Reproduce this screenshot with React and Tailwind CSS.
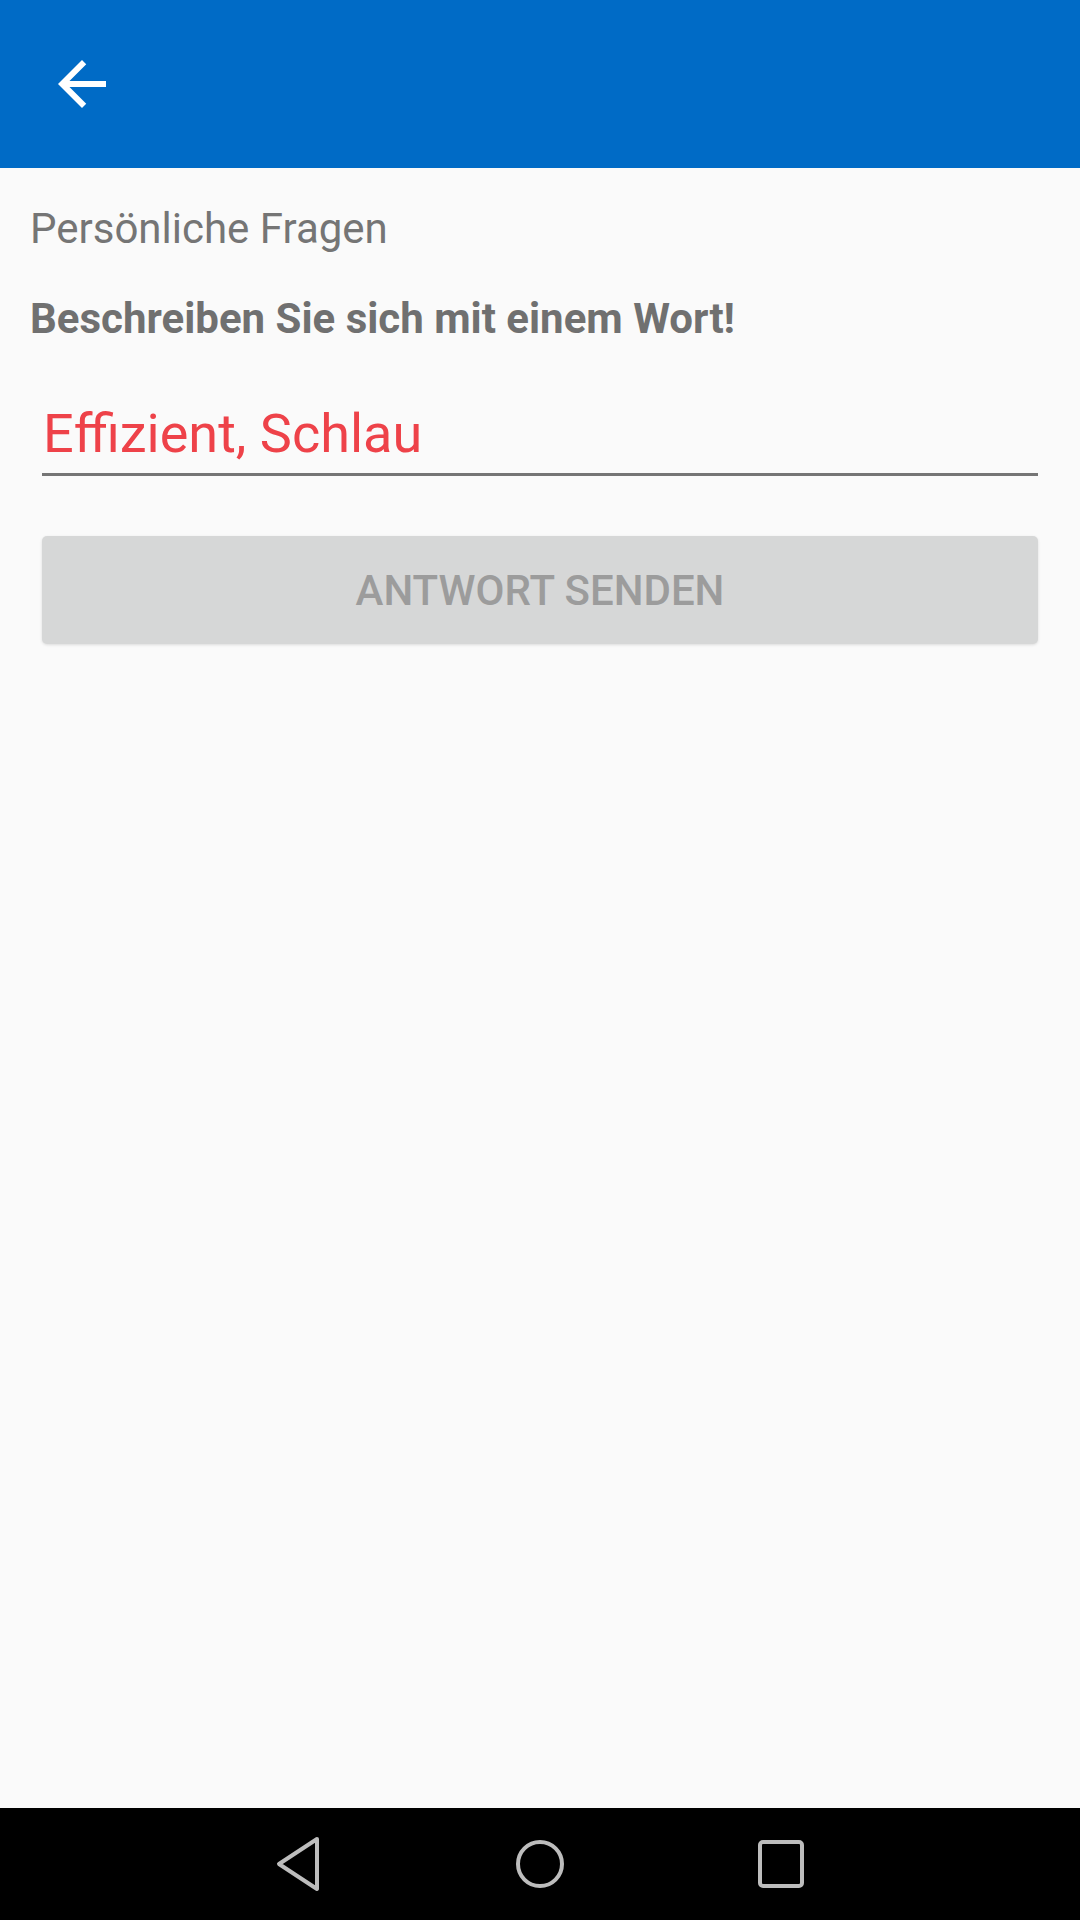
import React from "react";

function BackArrow() {
  return (
    <svg width="72" height="72" viewBox="0 0 24 24" fill="#ffffff">
      <path d="M20 11H7.83l5.59-5.59L12 4l-8 8 8 8 1.41-1.41L7.83 13H20v-2z" />
    </svg>
  );
}

function NavBar() {
  return (
    <div className="h-[112px] bg-black flex items-center justify-center gap-[193px]">
      <svg width="48" height="56" viewBox="0 0 48 56">
        <path
          d="M42 3 L4 28 L42 53 Z"
          fill="none"
          stroke="#bdbdbd"
          strokeWidth="4"
          strokeLinejoin="round"
        />
      </svg>
      <svg width="48" height="56" viewBox="0 0 48 56">
        <circle cx="24" cy="28" r="22" fill="none" stroke="#bdbdbd" strokeWidth="4" />
      </svg>
      <svg width="48" height="56" viewBox="0 0 48 56">
        <rect x="3" y="6" width="42" height="44" rx="3" fill="none" stroke="#bdbdbd" strokeWidth="4" />
      </svg>
    </div>
  );
}

export default function App() {
  return (
    <div
      className="h-[1920px] w-[1080px] flex flex-col bg-[#fafafa]"
      style={{ fontFamily: "Roboto, 'Noto Sans', sans-serif" }}
    >
      {/* toolbar */}
      <div className="h-[168px] bg-[#006bc6] flex items-center pl-[46px] shrink-0">
        <BackArrow />
      </div>

      {/* content */}
      <div className="flex-1 flex flex-col">
        <div className="mt-[36px] px-[30px] text-[42px] leading-[50px] text-[#757575]">
          Persönliche Fragen
        </div>
        <div className="mt-[40px] px-[30px] text-[42px] leading-[50px] font-bold text-[#707070]">
          Beschreiben Sie sich mit einem Wort!
        </div>

        <div className="mt-[58px] mx-[42px] border-b-[3px] border-[#757575] pb-[7px] px-[1px]">
          <div className="text-[54px] leading-[64px] text-[#ee4249]">Effizient, Schlau</div>
        </div>

        <button className="mt-[60px] mx-[42px] h-[108px] rounded-[5px] bg-[#d6d7d7] shadow-[0_1px_3px_rgba(0,0,0,0.12)] flex items-center justify-center text-[42px] font-medium text-[#9c9c9c]">
          ANTWORT SENDEN
        </button>
      </div>

      <NavBar />
    </div>
  );
}
